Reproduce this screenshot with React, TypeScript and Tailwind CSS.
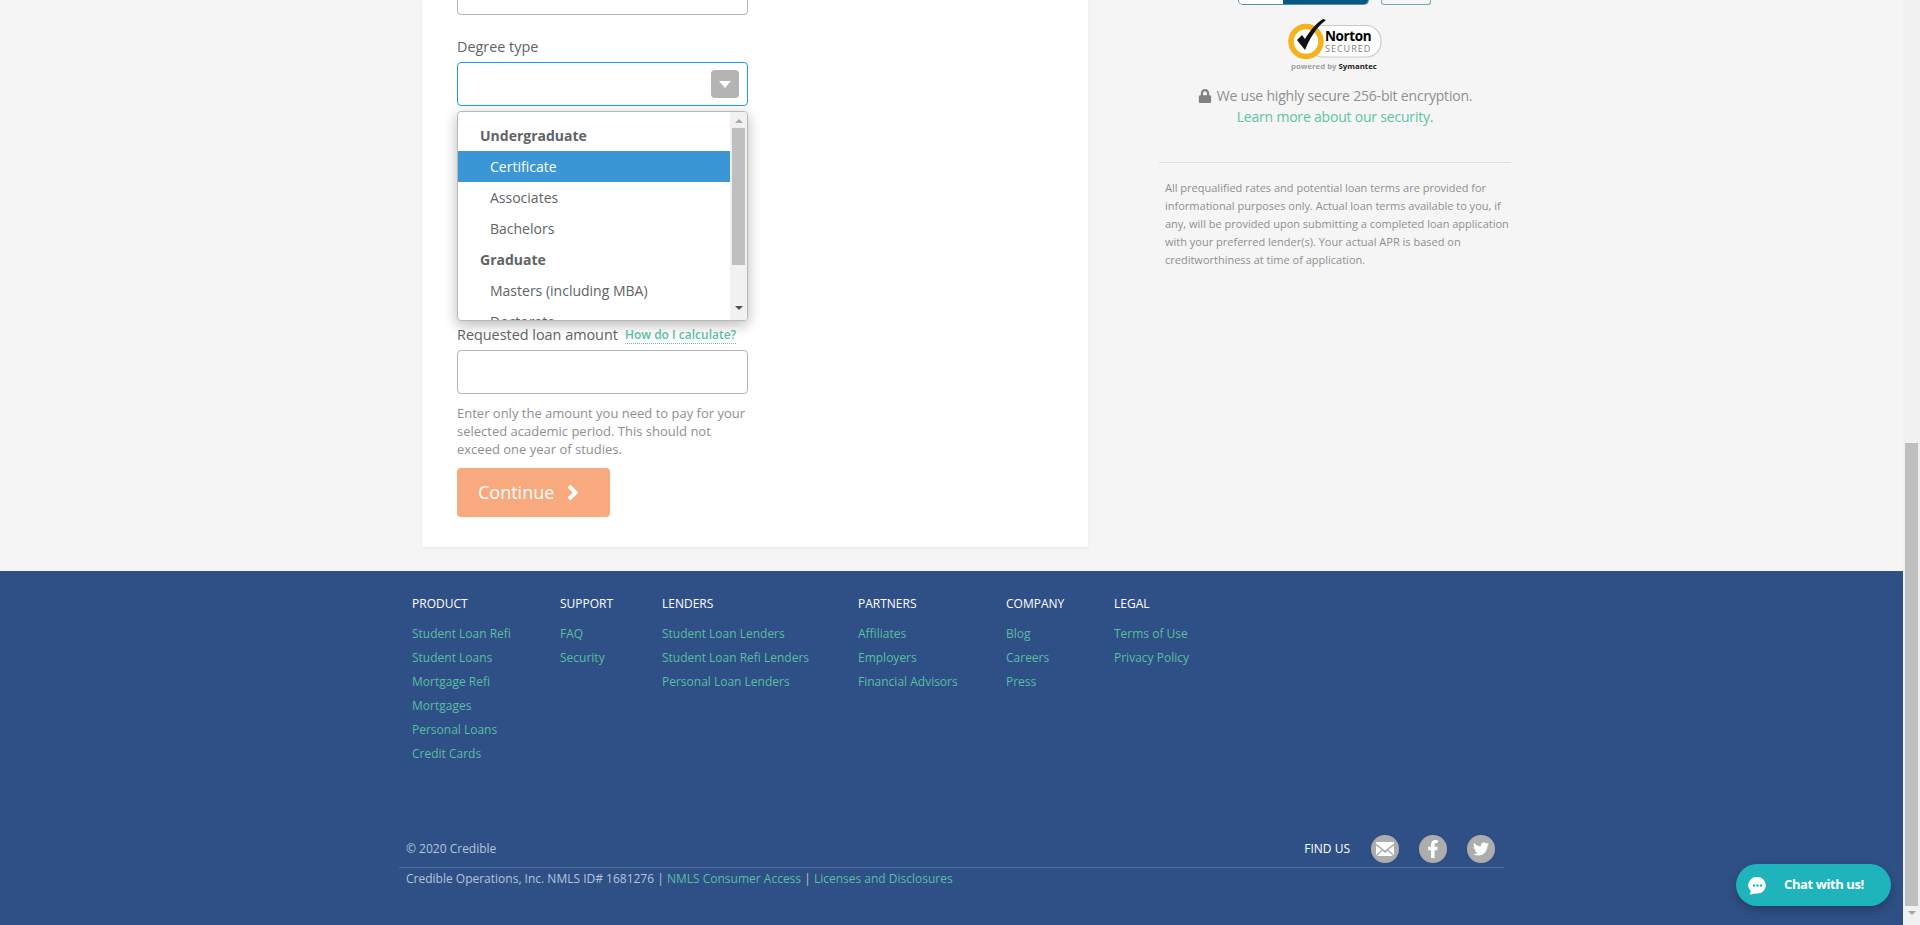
import React from "react";
import { FaFacebookF, FaLock, FaTwitter } from "react-icons/fa";

const cols = [
  { t: "PRODUCT", w: "w-[148px]", l: ["Student Loan Refi", "Student Loans", "Mortgage Refi", "Mortgages", "Personal Loans", "Credit Cards"] },
  { t: "SUPPORT", w: "w-[102px]", l: ["FAQ", "Security"] },
  { t: "LENDERS", w: "w-[196px]", l: ["Student Loan Lenders", "Student Loan Refi Lenders", "Personal Loan Lenders"] },
  { t: "PARTNERS", w: "w-[148px]", l: ["Affiliates", "Employers", "Financial Advisors"] },
  { t: "COMPANY", w: "w-[108px]", l: ["Blog", "Careers", "Press"] },
  { t: "LEGAL", w: "w-[100px]", l: ["Terms of Use", "Privacy Policy"] },
];

function Norton() {
  return (
    <svg width="96" height="52" viewBox="0 0 96 52" className="block">
      <rect x="20" y="6.5" width="73" height="31.5" rx="15" fill="#fff" stroke="#c9c9c9" strokeWidth="1.2" />
      <circle cx="18" cy="22.5" r="15" fill="#fff" stroke="#f6b21b" strokeWidth="5.5" />
      <path d="M9 21l8 10C21 21 28 8 38 1l-3-1c-8 5-14 13-18 20l-3-4z" fill="#111" />
      <text x="37" y="22" fontSize="13.5" fontWeight="700" fill="#000" fontFamily="'Open Sans', sans-serif" letterSpacing="-0.4">Norton</text>
      <text x="37" y="33" fontSize="9" fill="#808080" fontFamily="'Open Sans', sans-serif" letterSpacing="1">SECURED</text>
      <text x="3" y="50" fontSize="7.8" fontWeight="700" fill="#a0a0a0" fontFamily="'Open Sans', sans-serif">powered by <tspan fill="#222">Symantec</tspan></text>
    </svg>
  );
}

export default function App() {
  return (
    <div className="flex h-[925px] w-[1920px] overflow-hidden bg-[#f5f5f5] font-['Open_Sans',sans-serif] relative">
      <div className="flex w-[1903px] flex-col">
        <main className="flex h-[571px] pl-[422px]">
          <section className="h-[547px] w-[666px] bg-white pl-[35px] shadow-[0_1px_3px_rgba(0,0,0,0.06)]">
            <div className="mt-[-29px] h-[44px] w-[291px] rounded-[4px] border border-[#b4b4b4] bg-white" />
            <div className="mt-[21px] h-[26px] text-[14.4px] leading-[22px] text-[#616366]">Degree type</div>
            <div className="relative w-[291px]">
              <div className="flex h-[44px] items-center justify-end rounded-[4px] border border-[#1e9cf0] bg-white pr-[8px]">
                <div className="flex h-[28px] w-[28px] items-center justify-center rounded-[4px] bg-[#b4b4b4]">
                  <div className="h-0 w-0 border-x-[6px] border-t-[7px] border-x-transparent border-t-white" />
                </div>
              </div>
              <div className="absolute left-0 top-[49px] flex h-[210px] w-[291px] overflow-hidden rounded-[4px] border border-[#b9b9b9] bg-white shadow-[0_4px_14px_rgba(0,0,0,0.28)]">
                <div className="w-[272px] pt-[8px] text-[14px] text-[#616366]">
                  <div className="flex h-[31px] items-center pl-[22px] font-bold">Undergraduate</div>
                  <div className="flex h-[31px] items-center bg-[#3a96d4] pl-[32px] text-white">Certificate</div>
                  <div className="flex h-[31px] items-center pl-[32px]">Associates</div>
                  <div className="flex h-[31px] items-center pl-[32px]">Bachelors</div>
                  <div className="flex h-[31px] items-center pl-[22px] font-bold">Graduate</div>
                  <div className="flex h-[31px] items-center pl-[32px]">Masters (including MBA)</div>
                  <div className="flex h-[31px] items-center pl-[32px]">Doctorate</div>
                </div>
                <div className="flex w-[17px] flex-col items-center bg-[#f1f1f1]">
                  <div className="mt-[7px] h-0 w-0 border-x-[4px] border-b-[4px] border-x-transparent border-b-[#a8a8a8]" />
                  <div className="mt-[5px] h-[137px] w-[13px] bg-[#bfbfbf]" />
                  <div className="mt-[41px] h-0 w-0 border-x-[4px] border-t-[4px] border-x-transparent border-t-[#505050]" />
                </div>
              </div>
            </div>
            <div className="mt-[219px] flex h-[25px] items-start">
              <span className="text-[14.4px] leading-[20px] text-[#616366]">Requested loan amount</span>
              <span className="ml-[7px] mt-[2px] border-b border-dotted border-[#5cc4a1] text-[12px] font-semibold leading-[16px] text-[#5cc4a1]">How do I calculate?</span>
            </div>
            <div className="h-[44px] w-[291px] rounded-[4px] border border-[#b4b4b4] bg-white" />
            <p className="mt-[10px] w-[291px] text-[13px] leading-[18px] text-[#8f8f8f]">
              Enter only the amount you need to pay for your selected academic period. This should not exceed one year of studies.
            </p>
            <button className="mt-[10px] flex h-[49px] w-[153px] items-center rounded-[4px] bg-[#f8a97d] pl-[21px] text-[18px] text-white">
              Continue
              <svg width="13" height="17" viewBox="0 0 13 17" className="ml-[12px]">
                <path d="M3 2l6.5 6.5L3 15" fill="none" stroke="#fff" strokeWidth="4" />
              </svg>
            </button>
          </section>

          <aside className="ml-[71px] w-[352px] text-center">
            <div className="flex justify-center gap-[12px] pr-[1px]">
              <div className="flex h-[5px] w-[131px] overflow-hidden rounded-b-[5px] border border-t-0 border-[#5a8ea8]">
                <div className="w-[44px] bg-white" />
                <div className="flex-1 bg-[#005a84]" />
              </div>
              <div className="h-[5px] w-[50px] rounded-b-[3px] border border-t-0 border-[#7aa6ba]" />
            </div>
            <div className="mt-[14px] flex justify-center pl-[1px]"><Norton /></div>
            <p className="mt-[14px] flex items-center justify-center text-[14px] leading-[21px] tracking-[-0.2px] text-[#8f8f8f]">
              <FaLock className="mr-[5px] text-[14px] text-[#808080]" />
              We use highly secure 256-bit encryption.
            </p>
            <p className="text-[14px] leading-[21px] tracking-[-0.2px] text-[#5cc4a1]">Learn more about our security.</p>
            <div className="mt-[35px] border-t border-[#dcdcdc] pl-[6px] pt-[16px] text-left text-[11px] leading-[18px] text-[#8f8f8f]">
              All prequalified rates and potential loan terms are provided for informational purposes only. Actual loan terms available to you, if any, will be provided upon submitting a completed loan application with your preferred lender(s). Your actual APR is based on creditworthiness at time of application.
            </div>
          </aside>
        </main>

        <footer className="flex-1 bg-[#2f5086] pl-[399px] text-[12px]">
          <div className="flex pl-[13px] pt-[24px]">
            {cols.map((c) => (
              <div key={c.t} className={c.w}>
                <div className="h-[27px] font-medium leading-[18px] text-white">{c.t}</div>
                {c.l.map((x) => (
                  <div key={x} className="h-[24px] leading-[24px] text-[#58bfa0]">{x}</div>
                ))}
              </div>
            ))}
          </div>
          <div className="mt-[69px] flex h-[33px] w-[1105px] items-start justify-between border-b border-[#4f6b9b] pl-[7px] pr-[9px]">
            <div className="pt-[5px] leading-[18px] text-[#b4c4dc]">© 2020 Credible</div>
            <div className="flex items-center">
              <span className="mr-[21px] font-medium text-white">FIND US</span>
              <div className="flex h-[28px] w-[28px] items-center justify-center rounded-full bg-[#adadad]">
                <svg width="18" height="14" viewBox="0 0 18 14">
                  <path d="M0 1.5 9 8.5 18 1.5V0H0zM0 3.5V13l5.5-5.2zM18 3.5V13l-5.5-5.2zM1 14h16l-5.3-5.2L9 11 6.3 8.8z" fill="#fff" />
                </svg>
              </div>
              <div className="ml-[20px] flex h-[28px] w-[28px] items-center justify-center rounded-full bg-[#adadad] text-[18px] text-white"><FaFacebookF /></div>
              <div className="ml-[20px] flex h-[28px] w-[28px] items-center justify-center rounded-full bg-[#adadad] text-[16px] text-white"><FaTwitter /></div>
            </div>
          </div>
          <div className="pl-[7px] pt-[2px] leading-[18px] text-[#b4c4dc]">
            Credible Operations, Inc. NMLS ID# 1681276 | <span className="text-[#58bfa0]">NMLS Consumer Access</span> | <span className="text-[#58bfa0]">Licenses and Disclosures</span>
          </div>
        </footer>
      </div>

      <div className="flex w-[17px] flex-col items-center bg-[#f1f1f1]">
        <div className="mt-[443px] h-[463px] w-[13px] bg-[#bfbfbf]" />
        <div className="mt-[5px] h-0 w-0 border-x-[4px] border-t-[4px] border-x-transparent border-t-[#a3a3a3]" />
      </div>

      <div className="absolute left-[1736px] top-[864px] flex h-[42px] w-[155px] items-center rounded-[21px] bg-[#1fb3bb] pl-[12px] shadow-[0_4px_10px_rgba(0,0,0,0.25)]">
        <svg width="19" height="19" viewBox="0 0 19 19">
          <path d="M9.5 1a8.3 8.3 0 0 1 0 16.6c-2 0-5 .6-8 1 1-1.2 1.3-2.4 1.2-3.5A8.3 8.3 0 0 1 9.5 1z" fill="#fff" />
          <circle cx="6" cy="9.5" r="1.2" fill="#1fb3bb" />
          <circle cx="9.5" cy="9.5" r="1.2" fill="#1fb3bb" />
          <circle cx="13" cy="9.5" r="1.2" fill="#1fb3bb" />
        </svg>
        <span className="ml-[17px] text-[13px] font-bold tracking-[-0.4px] text-white">Chat with us!</span>
      </div>
    </div>
  );
}
